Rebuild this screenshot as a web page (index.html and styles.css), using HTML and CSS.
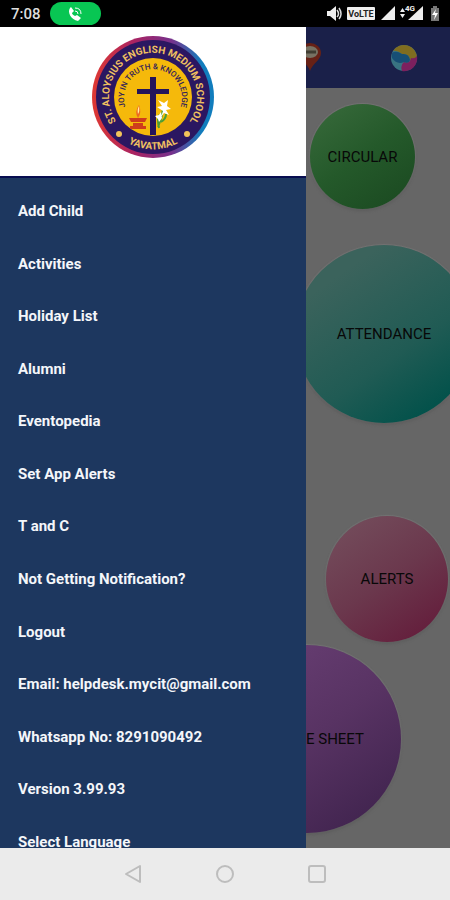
FILE: index.html
```html
<!DOCTYPE html>
<html lang="en">
<head>
<meta charset="utf-8">
<meta name="viewport" content="width=device-width, initial-scale=1">
<title>School Menu</title>
<link rel="stylesheet" href="styles.css">
</head>
<body>
<header class="status">
  <time class="clock">7:08</time>
  <span class="call">
    <svg width="18" height="18" viewBox="0 0 18 18" fill="none" stroke="#fff">
      <path d="M4 3C1 7 5 15 12 16L15 13L11 10L9 11C7 10 6 9 6 8L8 6L5 2Z" fill="#fff" stroke="none"/>
      <path d="M9 6q3 0 3 3M9 3q6 0 6 6"/>
    </svg>
  </span>
  <span class="indicators">
    <svg width="116" height="18" viewBox="0 0 116 18" fill="#eee">
      <path d="M1 6h3l6-5v15l-6-5H1z"/>
      <path d="M11 5q3 4 0 7M13 3q4 6 0 11" fill="none" stroke="#ddd" stroke-width="1.5"/>
      <rect x="21" y="2" width="28" height="13" rx="1"/>
      <text x="35" y="12" class="volte" text-anchor="middle">VoLTE</text>
      <path d="M55 15L69 1V15z"/>
      <path d="M82 15L97 1V15z"/>
      <path d="M74 7l2.500-4l2.500 4zM74 9h5l-2.500 4z"/>
      <text x="79" y="6" class="net">4G</text>
      <path d="M105 3h2V1h4v2h2v13h-8z" fill="#777"/>
      <path d="M110 4l-4 6h3l-1 5l4-7h-3z" fill="#fff"/>
    </svg>
  </span>
</header>

<div class="stage">
  <main class="home">
    <div class="topbar">
      <svg class="pin" width="24" height="30" viewBox="0 0 24 30">
        <path d="M12 28C10 21 1 17 1 10A11 10 0 0 1 23 10C23 17 14 21 12 28Z" fill="#672116"/>
        <ellipse cx="12" cy="9" rx="8" ry="6" fill="#777263"/>
        <path d="M5 9h13" stroke="#403d32" stroke-width="3"/>
      </svg>
      <svg class="swirl" width="28" height="28" viewBox="0 0 28 28">
        <circle cx="14" cy="14" r="13" fill="#397482"/>
        <path d="M3 7A13 13 0 0 1 27 14Q25 18 20 16Q19 9 12 10Q7 6 3 7Z" fill="#806d20"/>
        <path d="M27 12A13 13 0 0 1 12 27Q10 21 14 18Q20 20 21 14Q25 15 27 12Z" fill="#7c205e"/>
        <path d="M2 9Q6 6 12 10Q19 9 20 16Q19 20 14 18Q7 21 2 14Z" fill="#174f75"/>
      </svg>
    </div>
    <div class="bubbles">
      <button class="bubble circular">CIRCULAR</button>
      <button class="bubble attendance">ATTENDANCE</button>
      <button class="bubble alerts">ALERTS</button>
      <button class="bubble sheet">E SHEET</button>
    </div>
  </main>

  <nav class="drawer">
    <div class="crest">
      <svg width="124" height="124" viewBox="-62 -62 124 124">
        <defs>
          <linearGradient id="rim" x1="0" y1="0" x2="1" y2="0">
            <stop offset="0" stop-color="#df3932"/>
            <stop offset=".35" stop-color="#a92363"/>
            <stop offset=".65" stop-color="#77318c"/>
            <stop offset=".9" stop-color="#117dbd"/>
          </linearGradient>
          <path id="outer" d="M-32 30A44 44 0 1 1 32 30"/>
          <path id="inner" d="M-26 14A29 29 0 1 1 26 14"/>
          <path id="lower" d="M-42 31A52 52 0 0 0 42 31"/>
        </defs>
        <circle r="61" fill="url(#rim)"/>
        <circle r="57" fill="#2b1761"/>
        <circle r="39" fill="#f5b90b"/>
        <text class="name" text-anchor="middle"><textPath href="#outer" startOffset="50%">ST. ALOYSIUS ENGLISH MEDIUM SCHOOL</textPath></text>
        <text class="motto" text-anchor="middle"><textPath href="#inner" startOffset="50%">JOY IN TRUTH &amp; KNOWLEDGE</textPath></text>
        <text class="name" text-anchor="middle"><textPath href="#lower" startOffset="50%">YAVATMAL</textPath></text>
        <circle cx="-34" cy="37" r="3" fill="#f2c45a"/>
        <circle cx="34" cy="37" r="3" fill="#f2c45a"/>
        <path d="M-3-20H3V-8H16V-3H3V38H-3V-3H-16V-8H-3Z" fill="#24145a"/>
        <path d="M-24 21H-6L-8 25H-22ZM-20 26H-10V29H-7V32H-23V29H-20Z" fill="#cf3d1b"/>
        <path d="M-15 21Q-19 15-14 8Q-11 16-15 21Z" fill="#ee6821"/>
        <path d="M-15 17Q-16 12-14 9Q-13 14-15 17Z" fill="#fff3a0"/>
        <path d="M5 30Q9 21 10 12M6 31Q4 22 6 18M8 25Q13 22 13 17" stroke="#4b9e35" stroke-width="2" fill="none"/>
        <path d="M10 14L4 10L9 9L5 3L11 6L15 3L14 9L18 12L13 13L16 18L11 16L8 20ZM5 22L2 19L6 18L8 15L9 21L6 25Z" fill="#fff"/>
      </svg>
    </div>
    <ul class="menu">
      <li><a href="#">Add Child</a></li>
      <li><a href="#">Activities</a></li>
      <li><a href="#">Holiday List</a></li>
      <li><a href="#">Alumni</a></li>
      <li><a href="#">Eventopedia</a></li>
      <li><a href="#">Set App Alerts</a></li>
      <li><a href="#">T and C</a></li>
      <li><a href="#">Not Getting Notification?</a></li>
      <li><a href="#">Logout</a></li>
      <li><a href="#">Email: helpdesk.mycit@gmail.com</a></li>
      <li><a href="#">Whatsapp No: 8291090492</a></li>
      <li><a href="#">Version 3.99.93</a></li>
      <li><a href="#">Select Language</a></li>
    </ul>
  </nav>
</div>

<footer class="softkeys">
  <button aria-label="Back"><svg width="20" height="20" viewBox="0 0 20 20"><path d="M17 2V18L3 10Z"/></svg></button>
  <button aria-label="Home"><svg width="20" height="20" viewBox="0 0 20 20"><circle cx="10" cy="10" r="8"/></svg></button>
  <button aria-label="Recent apps"><svg width="20" height="20" viewBox="0 0 20 20"><rect x="2" y="2" width="16" height="16" rx="2"/></svg></button>
</footer>
</body>
</html>
```
FILE: styles.css
```css
* { box-sizing: border-box; }

body {
  margin: 0;
  height: 100vh;
  display: flex;
  flex-direction: column;
  overflow: hidden;
  font-family: Roboto, "Liberation Sans", sans-serif;
}

button {
  border: 0;
  padding: 0;
  background: none;
  font: inherit;
}

svg { display: block; flex: none; }

/* Status bar */
.status {
  flex: none;
  display: flex;
  align-items: center;
  height: 27px;
  padding: 0 8px 0 11px;
  background: #000;
}

.clock { color: #ddd; font-size: 15px; font-weight: 500; }

.call {
  display: flex;
  align-items: center;
  justify-content: center;
  width: 51px;
  height: 23px;
  margin-left: 9px;
  border-radius: 12px;
  background: #08c653;
}

.indicators { margin-left: auto; }
.volte { font-size: 9px; font-weight: 700; fill: #222; }
.net { font-size: 8px; font-weight: 700; }

/* Screen behind the drawer */
.stage {
  position: relative;
  flex: 1;
  min-height: 0;
  overflow: hidden;
  background: #666;
}

.topbar {
  display: flex;
  justify-content: flex-end;
  align-items: center;
  gap: 68px;
  height: 61px;
  padding-right: 32px;
  background: #1a2049;
}

.bubbles {
  display: flex;
  flex-direction: column;
  align-items: flex-end;
  padding-top: 16px;
}

.bubble {
  flex: none;
  border-radius: 50%;
  font-size: 15px;
  color: #080808;
  box-shadow: 0 2px 3px #5c5c5c, 0 0 1px 1px #747474;
}

.circular {
  width: 105px;
  height: 105px;
  margin-right: 35px;
  background: linear-gradient(145deg, #396b3c, #24592a 50%, #1a4820);
}

.attendance {
  width: 178px;
  height: 178px;
  margin: 36px -23px 0 0;
  background: linear-gradient(145deg, #3b635c 20%, #205b54 60%, #04524b 85%);
}

.alerts {
  width: 122px;
  height: 126px;
  margin: 93px 2px 0 0;
  background: linear-gradient(145deg, #75505e, #6b384d 50%, #65213e 85%);
}

.sheet {
  width: 188px;
  height: 188px;
  margin: 3px 49px 0 0;
  padding-right: 37px;
  text-align: right;
  background: linear-gradient(145deg, #6c4177, #583363 50%, #41244f 90%);
}

/* Drawer */
.drawer {
  position: absolute;
  inset: 0 auto 0 0;
  width: 68%;
  display: flex;
  flex-direction: column;
  overflow: hidden;
  background: #1d375f;
}

.crest {
  flex: none;
  display: flex;
  justify-content: center;
  padding: 8px 0 17px;
  background: #fff;
  border-bottom: 2px solid #080d50;
}

.name { font-size: 10px; font-weight: 700; fill: #f0c060; }
.motto { font-size: 8px; font-weight: 500; fill: #30205b; }

.menu {
  flex: 1;
  display: grid;
  grid-auto-rows: minmax(52px, 1fr);
  margin: 0 0 -20px;
  padding: 7px 0 0;
  list-style: none;
}

.menu a {
  display: flex;
  align-items: center;
  height: 100%;
  padding: 0 18px;
  color: #f4f6fa;
  font-size: 15px;
  font-weight: 700;
  text-decoration: none;
  white-space: nowrap;
}

/* System navigation */
.softkeys {
  flex: none;
  display: flex;
  justify-content: center;
  align-items: center;
  gap: 72px;
  height: 52px;
  background: #ebebeb;
}

.softkeys svg {
  fill: none;
  stroke: #bdbdbd;
  stroke-width: 2;
  stroke-linejoin: round;
}
```
